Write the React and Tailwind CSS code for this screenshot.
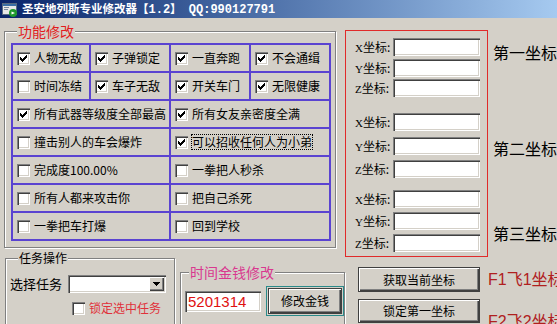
import React from "react";

const SUNKEN =
  "shadow-[inset_1px_1px_0_#808080,inset_2px_2px_0_#404040,inset_-1px_-1px_0_#ffffff,inset_-2px_-2px_0_#d4d0c8]";
const RAISED =
  "shadow-[inset_1px_1px_0_#ffffff,inset_-1px_-1px_0_#404040,inset_-2px_-2px_0_#808080]";

function Check({ checked }) {
  return (
    <span className={`relative inline-block w-[13px] h-[13px] shrink-0 bg-white ${SUNKEN}`}>
      {checked ? (
        <svg
          className="absolute left-[3px] top-[3px]"
          width="7"
          height="7"
          viewBox="0 0 7 7"
          shapeRendering="crispEdges"
        >
          <path
            fill="#000"
            d="M6 0h1v1h-1z M5 1h2v1h-2z M0 2h1v1h-1z M4 2h3v1h-3z M0 3h2v1h-2z M3 3h3v1h-3z M0 4h5v1h-5z M1 5h3v1h-3z M2 6h1v1h-1z"
          />
        </svg>
      ) : null}
    </span>
  );
}

const ROWS = [
  [
    { t: "人物无敌", c: true },
    { t: "子弹锁定", c: true },
    { t: "一直奔跑", c: true },
    { t: "不会通缉", c: true },
  ],
  [
    { t: "时间冻结", c: false },
    { t: "车子无敌", c: true },
    { t: "开关车门", c: true },
    { t: "无限健康", c: true },
  ],
  [
    { t: "所有武器等级度全部最高", c: true, s: true },
    { t: "所有女友亲密度全满", c: true, s: true },
  ],
  [
    { t: "撞击别人的车会爆炸", c: false, s: true },
    { t: "可以招收任何人为小弟", c: true, s: true, f: true },
  ],
  [
    { t: "完成度100.00%", c: false, s: true },
    { t: "一拳把人秒杀", c: false, s: true },
  ],
  [
    { t: "所有人都来攻击你", c: false, s: true },
    { t: "把自己杀死", c: false, s: true },
  ],
  [
    { t: "一拳把车打爆", c: false, s: true },
    { t: "回到学校", c: false, s: true },
  ],
];

function TitleIcon() {
  return (
    <svg width="16" height="15" viewBox="0 0 16 15" shapeRendering="crispEdges">
      <rect x="0" y="1" width="15" height="12" fill="#e8e8e8" />
      <rect x="0.5" y="1.5" width="14" height="11" fill="none" stroke="#5a6a80" strokeWidth="1" />
      <rect x="1" y="2" width="13" height="2" fill="#3a6ea5" />
      <rect x="2" y="5" width="5" height="1" fill="#7a8aa0" />
      <rect x="2" y="7" width="4" height="1" fill="#7a8aa0" />
      <circle cx="11" cy="11" r="4" fill="#1f9a2e" shapeRendering="auto" />
      <path d="M9.5 9.5 L13 11 L9.5 12.5 Z" fill="#fff" shapeRendering="auto" />
    </svg>
  );
}

function Field({ w, h, children, className = "" }) {
  return (
    <div className={`bg-white ${SUNKEN} ${className}`} style={{ width: w, height: h }}>
      {children}
    </div>
  );
}

function Group({ label, labelClass, className, legendClass = "", children }) {
  return (
    <fieldset
      className={`border border-[#808080] shadow-[inset_1px_1px_0_#ffffff,1px_1px_0_#ffffff] ${className}`}
    >
      <legend className={`bg-[#d4d0c8] px-[1px] ${legendClass} ${labelClass}`}>{label}</legend>
      {children}
    </fieldset>
  );
}

function CoordRow({ axis, mt }) {
  return (
    <div className={`flex items-center ${mt}`}>
      <span className="w-[38px] text-[12px] leading-[14px] text-black">
        <span className="font-['Liberation_Serif',serif] text-[11px]">{axis}</span>坐标:
      </span>
      <Field w={87} h={18} />
    </div>
  );
}

export default function App() {
  return (
    <div className="w-[557px] h-[324px] overflow-hidden bg-[#d4d0c8] font-['Noto_Sans_CJK_SC',sans-serif] text-black">
      {/* title bar */}
      <div className="h-[18px] flex items-center gap-[4px] pl-[2px] bg-gradient-to-r from-[#0a246a] to-[#a6caf0]">
        <TitleIcon />
        <span className="text-white font-bold text-[11.5px] leading-[14px] whitespace-nowrap">
          圣安地列斯专业修改器【
          <span className="font-['Liberation_Mono',monospace] text-[12px]">1.2</span>】
          <span className="font-['Liberation_Mono',monospace] text-[12px]"> QQ:990127791</span>
        </span>
      </div>

      <div className="flex">
        {/* left column */}
        <div className="w-[345px] shrink-0 flex flex-col">
          <Group
            label="功能修改"
            labelClass="text-[#e21c1c] text-[14px] leading-[16px]"
            legendClass="ml-[6px]"
            className="ml-[4px] mt-[5px] w-[332px] h-[225px] pl-[6px] pt-[4px]"
          >
            <div className="grid grid-cols-[76px_78px_78px_78px] grid-rows-[repeat(7,26px)] gap-[2px] p-[2px] bg-[#5a43d1] w-[320px]">
              {ROWS.flatMap((row, ri) =>
                row.map((it, ci) => (
                  <div
                    key={`${ri}-${ci}`}
                    className={`bg-[#d4d0c8] flex items-center gap-[4px] pl-[4px] ${
                      it.s ? "col-span-2" : ""
                    }`}
                  >
                    <Check checked={it.c} />
                    <span
                      className={`text-[12px] leading-[14px] whitespace-nowrap ${
                        it.f ? "outline outline-1 outline-dotted outline-black" : ""
                      }`}
                    >
                      {it.t}
                    </span>
                  </div>
                ))
              )}
            </div>
          </Group>

          <div className="flex items-start gap-[5px] ml-[5px] mt-[3px]">
            <Group
              label="任务操作"
              labelClass="text-black text-[12px] leading-[14px]"
              legendClass="ml-[8px]"
              className="w-[172px] h-[90px] pl-[4px] pt-[10px]"
            >
              <div className="flex items-center gap-[6px]">
                <span className="text-[13px] leading-[16px]">选择任务</span>
                <div className={`relative w-[98px] h-[18px] bg-white ${SUNKEN}`}>
                  <div
                    className={`absolute right-[2px] top-[2px] w-[15px] h-[14px] bg-[#d4d0c8] ${RAISED} flex items-center justify-center`}
                  >
                    <svg width="7" height="4" viewBox="0 0 7 4" shapeRendering="crispEdges">
                      <path d="M0 0h7v1h-7z M1 1h5v1h-5z M2 2h3v1h-3z M3 3h1v1h-1z" fill="#000" />
                    </svg>
                  </div>
                </div>
              </div>
              <div className="flex items-center gap-[4px] ml-[62px] mt-[8px]">
                <Check checked={false} />
                <span className="text-[12px] leading-[14px] text-[#e0303a]">锁定选中任务</span>
              </div>
            </Group>

            <Group
              label="时间金钱修改"
              labelClass="text-[#d9388f] text-[14px] leading-[16px]"
              legendClass="ml-[4px]"
              className="mt-[13px] w-[163px] h-[80px] pl-[4px] pt-[6px]"
            >
              <div className="flex items-center gap-[5px]">
                <Field w={76} h={21} className="flex items-center pl-[3px]">
                  <span className="font-['Liberation_Sans',sans-serif] text-[15px] leading-[17px] text-[#e01010]">
                    5201314
                  </span>
                </Field>
                <div className="border border-[#2a8a8a] w-[78px] h-[30px] p-[1px]">
                  <div
                    className={`w-full h-full bg-[#d4d0c8] border border-[#404040] ${RAISED} flex items-center justify-center text-[12px] leading-[14px]`}
                  >
                    修改金钱
                  </div>
                </div>
              </div>
            </Group>
          </div>
        </div>

        {/* right column */}
        <div className="flex-1 flex flex-col">
          <div className="flex">
            <div className="mt-[12px] w-[143px] h-[227px] border border-[#e02a2a] pl-[9px] flex flex-col shrink-0">
              <CoordRow axis="X" mt="mt-[7px]" />
              <CoordRow axis="Y" mt="mt-[3px]" />
              <CoordRow axis="Z" mt="mt-[2px]" />
              <CoordRow axis="X" mt="mt-[16px]" />
              <CoordRow axis="Y" mt="mt-[6px]" />
              <CoordRow axis="Z" mt="mt-[5px]" />
              <CoordRow axis="X" mt="mt-[12px]" />
              <CoordRow axis="Y" mt="mt-[4px]" />
              <CoordRow axis="Z" mt="mt-[4px]" />
            </div>
            <div className="ml-[5px] flex flex-col text-[16px] leading-[18px] whitespace-nowrap">
              <span className="mt-[25px]">第一坐标</span>
              <span className="mt-[78px]">第二坐标</span>
              <span className="mt-[67px]">第三坐标</span>
            </div>
          </div>

          <div className="flex mt-[10px]">
            <div className="ml-[13px] flex flex-col gap-[7px] w-[122px] shrink-0">
              <div
                className={`h-[25px] bg-[#d4d0c8] border border-[#404040] ${RAISED} flex items-center justify-center text-[12px] leading-[14px]`}
              >
                获取当前坐标
              </div>
              <div
                className={`h-[24px] bg-[#d4d0c8] border border-[#404040] ${RAISED} flex items-center justify-center text-[12px] leading-[14px]`}
              >
                锁定第一坐标
              </div>
            </div>
            <div className="ml-[8px] flex flex-col text-[16px] leading-[18px] text-[#b0201e] whitespace-nowrap font-['Liberation_Sans','Noto_Sans_CJK_SC',sans-serif]">
              <span className="mt-[4px]">F1飞1坐标</span>
              <span className="mt-[24px]">F2飞2坐标</span>
            </div>
          </div>
        </div>
      </div>
    </div>
  );
}
